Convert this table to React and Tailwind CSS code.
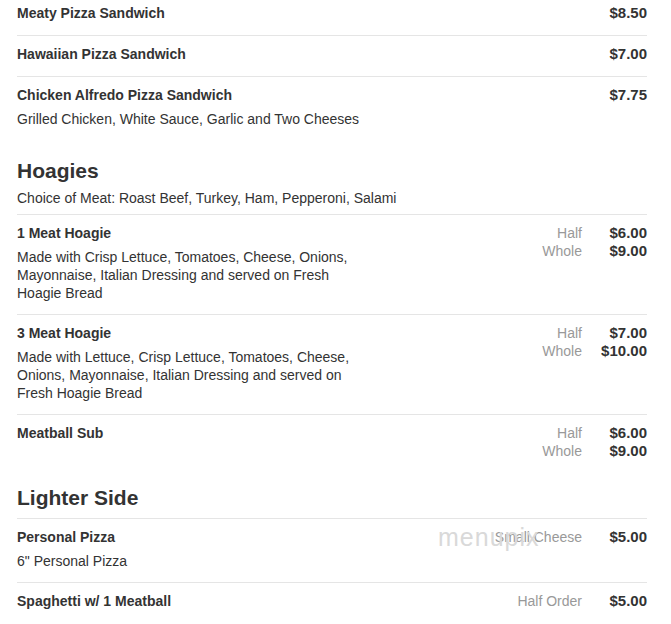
const font = { fontFamily: '"Liberation Sans", Arial, sans-serif' };

function Prices({ sizes }) {
  return (
    <div className="grid shrink-0 grid-cols-[auto_65px] content-start self-start text-[#333]">
      {sizes.map(([label, price]) => (
        <div key={label + price} className="contents">
          <span className="text-right text-[14px] leading-[18px] text-[#999]">{label}</span>
          <span className="text-right text-[15px] font-bold leading-[18px]">{price}</span>
        </div>
      ))}
    </div>
  );
}

function Item({ title, desc, sizes, border = true, narrow, first, watermark }) {
  return (
    <div
      className={`relative flex justify-between ${desc ? "pb-[12px]" : "pb-[13px]"} ${
        first ? "pt-[4px]" : "pt-[9px]"
      } ${border ? "border-b border-[#e5e5e5]" : ""}`}
    >
      <div className="min-w-0">
        <div className="text-[14px] font-bold leading-[18px] text-[#333]">{title}</div>
        {desc && (
          <div className={`mt-[6px] text-[14px] leading-[18px] text-[#333] ${narrow ? "max-w-[345px]" : ""}`}>
            {desc}
          </div>
        )}
      </div>
      <Prices sizes={sizes} />
      {watermark && (
        <span className="pointer-events-none absolute left-[421px] top-[6px] text-[25px] font-light leading-none tracking-[1px] text-[#d9d9d9]">
          menupix
        </span>
      )}
    </div>
  );
}

function Heading({ title, desc, className }) {
  return (
    <div className={`border-b border-[#e5e5e5] ${desc ? "pb-[7px]" : "pb-[8px]"} ${className}`}>
      <h2 className="text-[21px] font-bold leading-[24px] text-[#333]">{title}</h2>
      {desc && <p className="mt-[6px] text-[14px] leading-[18px] text-[#333]">{desc}</p>}
    </div>
  );
}

export default function App() {
  return (
    <div className="h-[624px] w-[671px] overflow-hidden bg-white pl-[17px] pr-[24px]" style={font}>
      <Item first title="Meaty Pizza Sandwich" sizes={[["", "$8.50"]]} />
      <Item title="Hawaiian Pizza Sandwich" sizes={[["", "$7.00"]]} />
      <Item
        title="Chicken Alfredo Pizza Sandwich"
        desc="Grilled Chicken, White Sauce, Garlic and Two Cheeses"
        sizes={[["", "$7.75"]]}
        border={false}
      />

      <Heading
        className="mt-[19px]"
        title="Hoagies"
        desc="Choice of Meat: Roast Beef, Turkey, Ham, Pepperoni, Salami"
      />
      <Item
        narrow
        title="1 Meat Hoagie"
        desc="Made with Crisp Lettuce, Tomatoes, Cheese, Onions, Mayonnaise, Italian Dressing and served on Fresh Hoagie Bread"
        sizes={[["Half", "$6.00"], ["Whole", "$9.00"]]}
      />
      <Item
        narrow
        title="3 Meat Hoagie"
        desc="Made with Lettuce, Crisp Lettuce, Tomatoes, Cheese, Onions, Mayonnaise, Italian Dressing and served on Fresh Hoagie Bread"
        sizes={[["Half", "$7.00"], ["Whole", "$10.00"]]}
      />
      <Item title="Meatball Sub" sizes={[["Half", "$6.00"], ["Whole", "$9.00"]]} border={false} />

      <Heading className="mt-[13px]" title="Lighter Side" />
      <Item
        watermark
        title="Personal Pizza"
        desc={'6" Personal Pizza'}
        sizes={[["Small Cheese", "$5.00"]]}
      />
      <Item title="Spaghetti w/ 1 Meatball" sizes={[["Half Order", "$5.00"]]} border={false} />
    </div>
  );
}
